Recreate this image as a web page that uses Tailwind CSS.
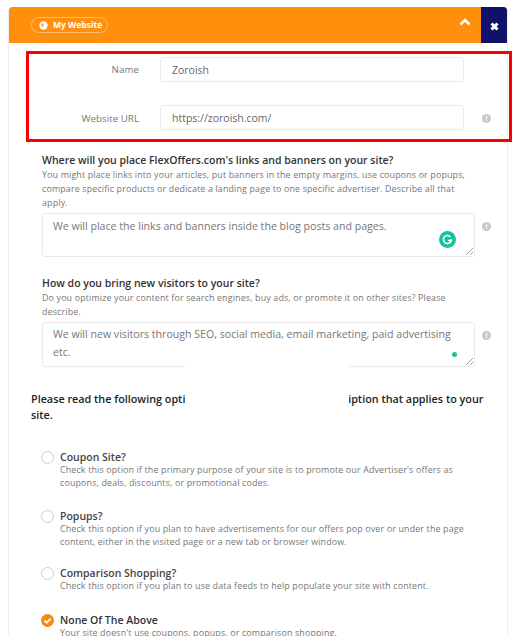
<!DOCTYPE html>
<html lang="en">
<head>
    <meta charset="UTF-8">
    <meta name="viewport" content="width=device-width, initial-scale=1.0">
    <title>My Website</title>
    <script src="https://cdn.jsdelivr.net/npm/@tailwindcss/browser@4"></script>
</head>
<body class="bg-white h-[636px] overflow-hidden relative font-['Open_Sans',sans-serif]">

    <div class="ml-[8px] mt-[7px] w-[500px] h-[640px] border-x border-[#f0f0f0] rounded-t">
        <!-- header -->
        <div class="h-[36px] bg-[#ff8f0c] flex items-stretch rounded-t">
            <div class="flex-1 flex items-center pl-[22px]">
                <div class="h-[16px] w-[77px] border border-white/40 rounded-full flex items-center pl-[7px] gap-[5px] text-white text-[8.5px] font-bold">
                    <svg class="w-[9px] h-[9px]" viewBox="0 0 10 10"><circle cx="5" cy="5" r="4.6" fill="#fff"/><path d="M3 2.5l2.5.5.5 1.5-1.5 1-.5 2-1-1.5-1-1.5z" fill="#ffb566"/></svg>
                    My Website
                </div>
            </div>
            <div class="w-[22px] flex justify-start pt-[11px]">
                <svg class="w-[12px] h-[9px]" viewBox="0 0 12 9"><path d="M1.5 6.500L6 2l4.500 4.500" fill="none" stroke="#fff" stroke-width="2.6"/></svg>
            </div>
            <div class="w-[26px] bg-[#11116b] rounded-tr flex justify-center items-center pt-[3px]">
                <svg class="w-[9px] h-[9px]" viewBox="0 0 9 9"><path d="M1.500 1.500l6 6M7.500 1.500l-6 6" fill="none" stroke="#fff" stroke-width="3"/></svg>
            </div>
        </div>

        <!-- name + url -->
        <div class="pt-[14px] flex flex-col gap-[23px]">
            <div class="flex items-center h-[25px]">
                <label class="w-[130px] pt-[2px] text-right text-[9.8px] font-medium text-[#777]">Name</label>
                <div class="ml-[21px] w-[304px] h-[25px] border border-[#eaeaea] rounded-[3px] px-[11px] pt-[2px] flex items-center text-[10.5px] text-[#666]">Zoroish</div>
            </div>
            <div class="flex items-center h-[25px]">
                <label class="w-[130px] pt-[3px] text-right text-[9.8px] font-medium text-[#777]">Website URL</label>
                <div class="ml-[21px] w-[304px] h-[25px] border border-[#eaeaea] rounded-[3px] px-[11px] pt-[2px] flex items-center text-[10.5px] text-[#666]">https://zoroish.com/</div>
                <span class="ml-[18px] mt-[2px] w-[9px] h-[9px] rounded-full bg-[#c8c8c8] text-white text-[7px] font-bold leading-[9px] text-center">!</span>
            </div>
        </div>

        <!-- question 1 -->
        <div class="ml-[33px] mt-[22px] w-[460px]">
            <h3 class="text-[10.5px] leading-[16px] font-semibold text-[#333]">Where will you place FlexOffers.com's links and banners on your site?</h3>
            <p class="text-[8.9px] tracking-[0.15px] leading-[14px] text-[#777] w-[432px]">You might place links into your articles, put banners in the empty margins, use coupons or popups, compare specific products or dedicate a landing page to one specific advertiser. Describe all that apply.</p>
            <div class="flex items-start mt-[3px]">
                <div class="relative w-[433px] h-[44px] border border-[#eaeaea] rounded-[3px] pl-[10px] pt-[4px] text-[10.6px] leading-[17px] text-[#777]">
                    We will place the links and banners inside the blog posts and pages.
                    <svg class="absolute right-[18px] top-[17px] w-[17px] h-[17px]" viewBox="0 0 17 17"><circle cx="8.500" cy="8.500" r="8.500" fill="#15c39a"/><path d="M11.500 6A4 4 0 1 0 12.300 9.500H9M12 10.500V8" fill="none" stroke="#fff" stroke-width="1.500"/></svg>
                    <svg class="absolute right-0 bottom-0 w-[9px] h-[9px]" viewBox="0 0 9 9"><path d="M1 8l7-7M5 8l3-3" stroke="#888" stroke-width="0.800"/></svg>
                </div>
                <span class="ml-[7px] mt-[9px] w-[9px] h-[9px] rounded-full bg-[#c8c8c8] text-white text-[7px] font-bold leading-[9px] text-center">!</span>
            </div>
        </div>

        <!-- question 2 -->
        <div class="ml-[33px] mt-[18px] w-[460px]">
            <h3 class="text-[10.5px] leading-[16px] font-semibold text-[#333]">How do you bring new visitors to your site?</h3>
            <p class="text-[8.9px] tracking-[0.15px] leading-[14px] text-[#777] w-[432px]">Do you optimize your content for search engines, buy ads, or promote it on other sites? Please describe.</p>
            <div class="flex items-start mt-[3px]">
                <div class="relative w-[433px] h-[45px] border border-[#eaeaea] rounded-[3px] pl-[10px] pr-[16px] pt-[2px] text-[10.6px] leading-[18px] text-[#777]">
                    We will new visitors through SEO, social media, email marketing, paid advertising etc.
                    <span class="absolute right-[17px] bottom-[9px] w-[5px] h-[5px] rounded-full bg-[#15c39a]"></span>
                    <svg class="absolute right-0 bottom-0 w-[9px] h-[9px]" viewBox="0 0 9 9"><path d="M1 8l7-7M5 8l3-3" stroke="#888" stroke-width="0.800"/></svg>
                </div>
                <span class="ml-[7px] mt-[9px] w-[9px] h-[9px] rounded-full bg-[#c8c8c8] text-white text-[7px] font-bold leading-[9px] text-center">!</span>
            </div>
        </div>

        <!-- options -->
        <div class="ml-[22px] mt-[24px] w-[466px]">
            <h3 class="text-[10.8px] leading-[16px] font-semibold text-[#222]">Please read the following options, and choose the right description that applies to your site.</h3>
        </div>
        <div class="ml-[32px] mt-[27px] w-[424px] text-[8.9px] tracking-[0.15px] leading-[12.5px] text-[#777]">
            <div class="flex gap-[6px] h-[59px]">
                <span class="shrink-0 mt-[1px] w-[13px] h-[13px] rounded-full border border-[#ccc]"></span>
                <div>
                    <div class="text-[10.5px] tracking-normal leading-[14px] font-semibold text-[#444]">Coupon Site?</div>
                    <p>Check this option if the primary purpose of your site is to promote our Advertiser's offers as coupons, deals, discounts, or promotional codes.</p>
                </div>
            </div>
            <div class="flex gap-[6px] h-[57px]">
                <span class="shrink-0 mt-[1px] w-[13px] h-[13px] rounded-full border border-[#ccc]"></span>
                <div>
                    <div class="text-[10.5px] tracking-normal leading-[14px] font-semibold text-[#444]">Popups?</div>
                    <p>Check this option if you plan to have advertisements for our offers pop over or under the page content, either in the visited page or a new tab or browser window.</p>
                </div>
            </div>
            <div class="flex gap-[6px] h-[47px]">
                <span class="shrink-0 mt-[1px] w-[13px] h-[13px] rounded-full border border-[#ccc]"></span>
                <div>
                    <div class="text-[10.5px] tracking-normal leading-[14px] font-semibold text-[#444]">Comparison Shopping?</div>
                    <p>Check this option if you plan to use data feeds to help populate your site with content.</p>
                </div>
            </div>
            <div class="flex gap-[6px]">
                <svg class="shrink-0 mt-[1px] w-[13px] h-[13px]" viewBox="0 0 13 13"><circle cx="6.500" cy="6.500" r="6.500" fill="#f58a0f"/><path d="M3.500 6.500l2.200 2.200 4-4" fill="none" stroke="#fff" stroke-width="1.800"/></svg>
                <div>
                    <div class="text-[10.5px] tracking-normal leading-[14px] font-semibold text-[#333]">None Of The Above</div>
                    <p>Your site doesn't use coupons, popups, or comparison shopping.</p>
                </div>
            </div>
        </div>
    </div>

    <!-- annotation drawn over the form -->
    <div class="absolute left-[26px] top-[51px] w-[486px] h-[91px] border-[3px] border-[#f00]"></div>
    <!-- white patch covering part of the screenshot -->
    <div class="absolute left-[185px] top-[366px] w-[164px] h-[42px] bg-white"></div>

</body>
</html>
